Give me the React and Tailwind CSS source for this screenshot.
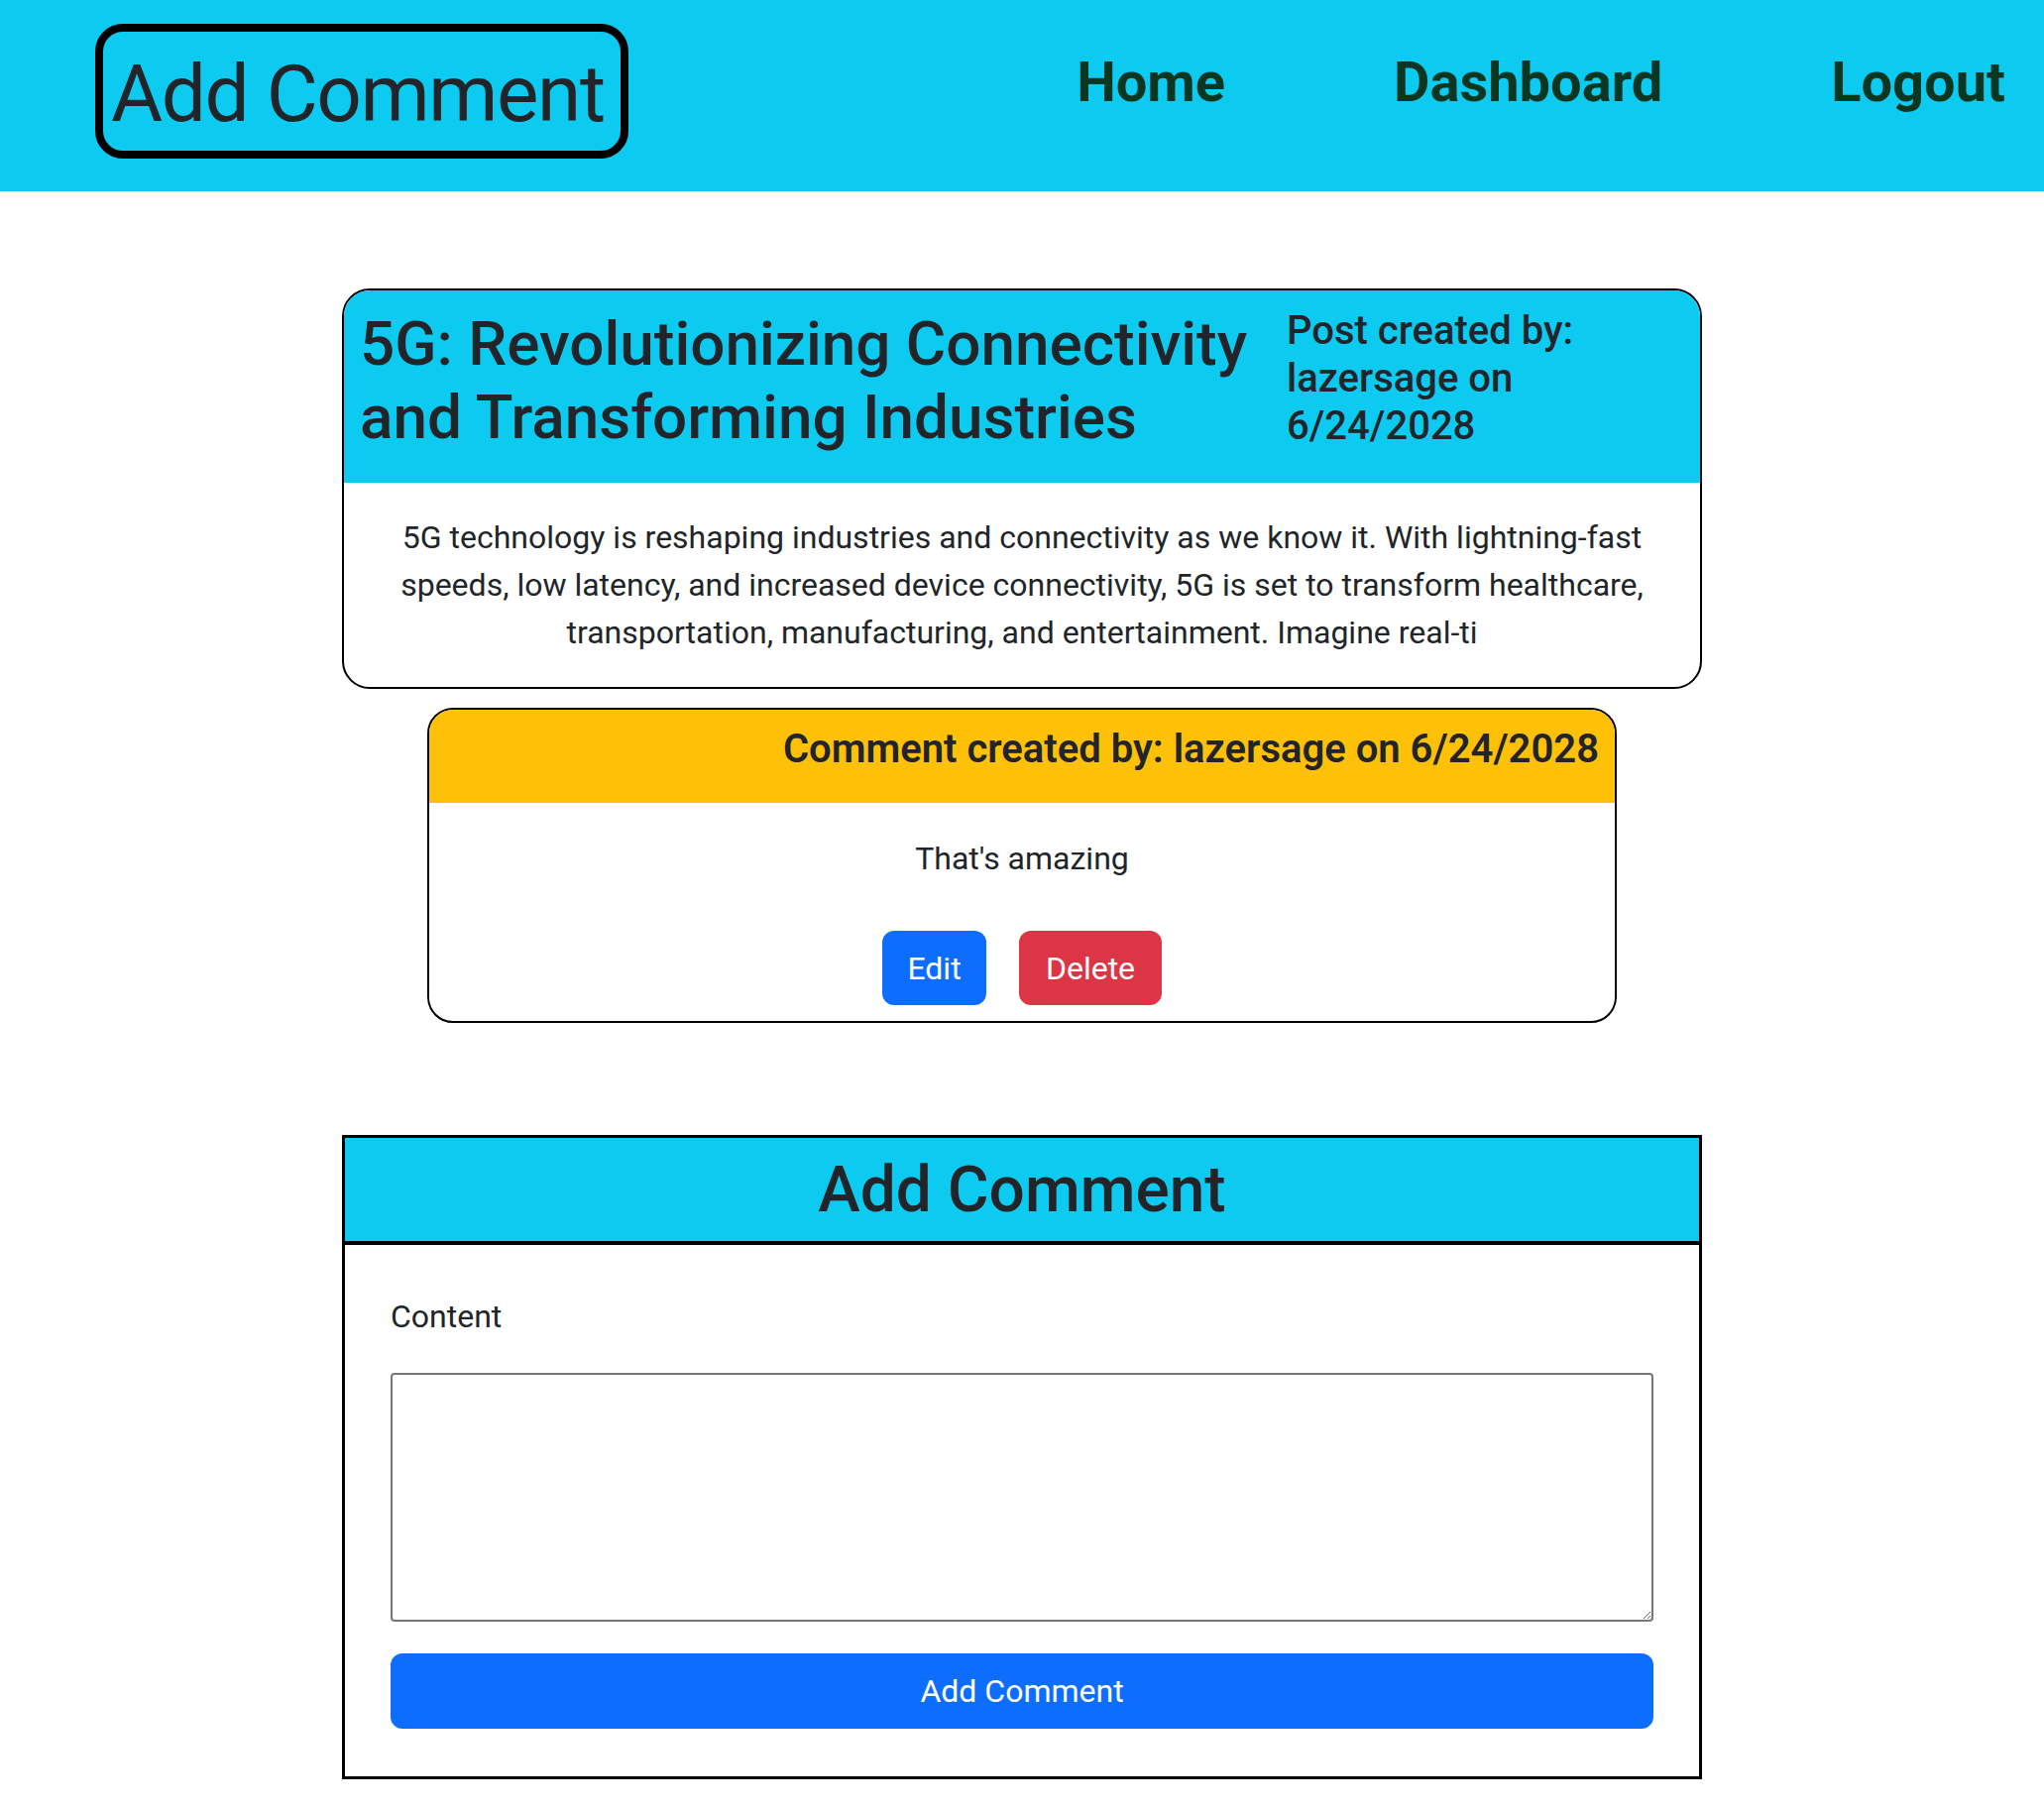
export default function App() {
  return (
    <div className="min-h-[1826px] bg-white font-['Roboto','Noto_Sans',sans-serif] text-[#212529]">
      {/* NAVBAR */}
      <nav className="flex h-[193px] items-start bg-[#0dcaf0] pl-[96px] pr-[39px]">
        <div className="mt-[24px] rounded-[28px] border-8 border-black pl-[8px] pr-[16px] pt-[15px] pb-[9px] text-[80px] leading-[96px] tracking-[-1.4px]">
          Add Comment
        </div>

        <ul className="ml-auto flex gap-[170px] pt-[50px] text-[56px] font-bold leading-[67px] text-[#0a3622]">
          <li>Home</li>
          <li>Dashboard</li>
          <li>Logout</li>
        </ul>
      </nav>

      {/* POST */}
      <div className="mx-auto mt-[98px] w-[1372px] overflow-hidden rounded-[28px] border-2 border-black">
        <div className="flex items-start bg-[#0dcaf0] px-[16px] pt-[17px] pb-[29px]">
          <h2 className="w-[935px] shrink-0 pr-[20px] text-[62px] font-medium leading-[74px]">
            5G: Revolutionizing Connectivity and Transforming Industries
          </h2>
          <h5 className="text-[40px] font-medium leading-[48px]">
            Post created by: lazersage on 6/24/2028
          </h5>
        </div>
        <div className="px-[32px] pt-[31px] pb-[31px] text-center text-[32px] leading-[48px]">
          5G technology is reshaping industries and connectivity as we know it. With lightning-fast speeds, low latency, and
          increased device connectivity, 5G is set to transform healthcare, transportation, manufacturing, and entertainment.
          Imagine real-ti
        </div>
      </div>

      {/* COMMENT */}
      <div className="mx-auto mt-[19px] w-[1200px] overflow-hidden rounded-[26px] border-2 border-black">
        <div className="bg-[#ffc107] px-[16px] pt-[16px] pb-[30px] text-right text-[40px] font-semibold leading-[48px]">
          Comment created by: lazersage on 6/24/2028
        </div>
        <div className="px-[32px] pt-[32px] pb-[16px] text-center">
          <p className="text-[32px] leading-[48px]">That's amazing</p>
          <div className="mt-[49px] flex justify-center gap-[33px]">
            <button className="h-[75px] w-[105px] rounded-[12px] bg-[#0d6efd] text-[32px] text-white">Edit</button>
            <button className="h-[75px] w-[144px] rounded-[12px] bg-[#dc3545] text-[32px] text-white">Delete</button>
          </div>
        </div>
      </div>

      {/* ADD COMMENT FORM */}
      <form className="mx-auto mt-[113px] w-[1372px] border-[3px] border-black">
        <div className="border-b-4 border-black bg-[#0dcaf0] pt-[14px] pb-[13px] text-center text-[64px] font-medium leading-[77px]">
          Add Comment
        </div>
        <div className="px-[46px] pt-[48px] pb-[48px]">
          <label className="block text-[32px] leading-[48px]">Content</label>
          <textarea className="mt-[33px] block h-[251px] w-full rounded-[4px] border-2 border-[#767676] bg-white" />
          <button
            type="button"
            className="mt-[32px] h-[76px] w-full rounded-[12px] bg-[#0d6efd] text-[32px] text-white"
          >
            Add Comment
          </button>
        </div>
      </form>
    </div>
  );
}
